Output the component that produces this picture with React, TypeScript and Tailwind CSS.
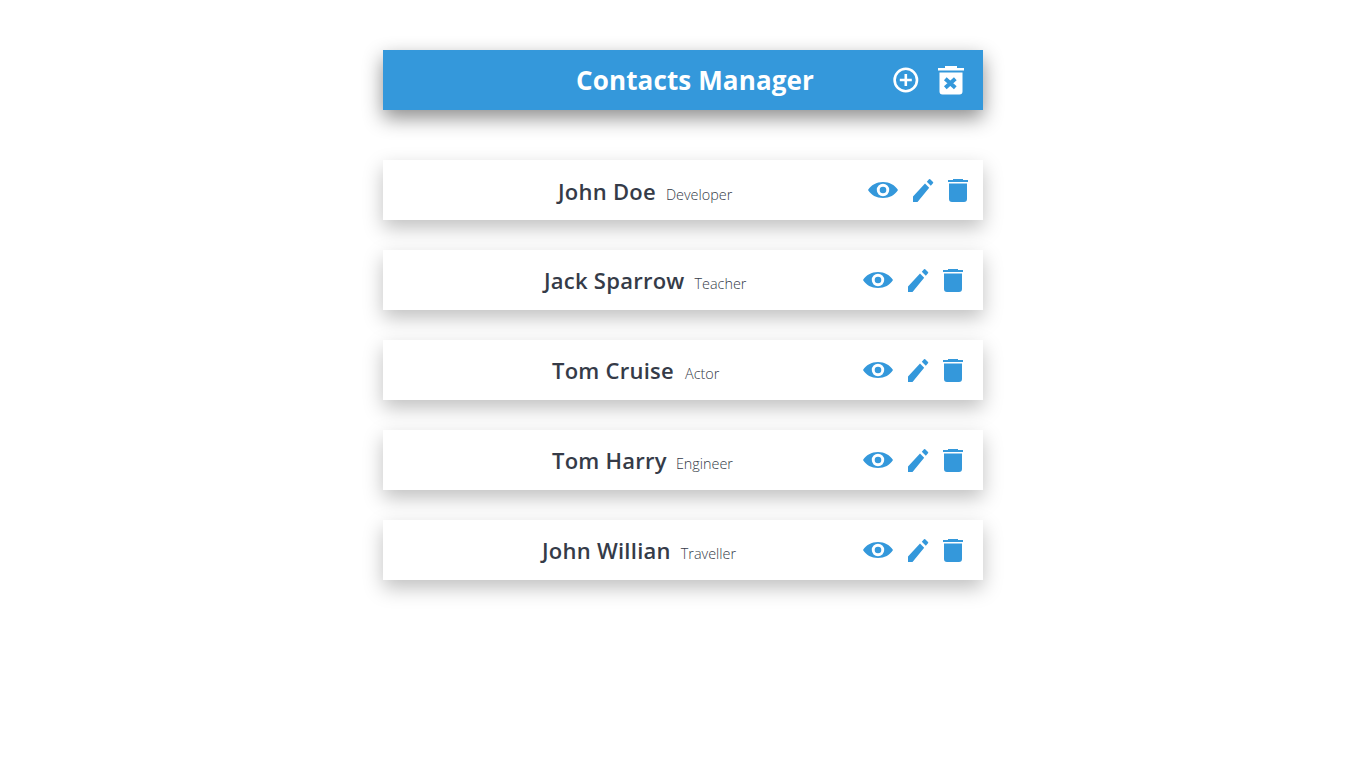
const contacts = [
  { name: "John Doe", job: "Developer", text: "ml-[175px] pt-[2px]", jobGap: "ml-[10px]", icons: "flex items-center gap-[14px] mr-[15px]" },
  { name: "Jack Sparrow", job: "Teacher", text: "ml-[161px]", jobGap: "ml-[10px]", icons: "flex items-center gap-[14px] mr-[20px]" },
  { name: "Tom Cruise", job: "Actor", text: "ml-[169px]", jobGap: "ml-[11px]", icons: "flex items-center gap-[14px] mr-[20px]" },
  { name: "Tom Harry", job: "Engineer", text: "ml-[169px]", jobGap: "ml-[9px]", icons: "flex items-center gap-[14px] mr-[20px]" },
  { name: "John Willian", job: "Traveller", text: "ml-[159px]", jobGap: "ml-[10px]", icons: "flex items-center gap-[14px] mr-[20px]" },
];

const EyeIcon = () => (
  <svg viewBox="0 0 30 20" className="w-[30px] h-5 block" fill="#3498db" fillRule="evenodd">
    <path d="M0 10C3 5 8.500 2 15 2s12 3 15 8c-3 5-8.500 8-15 8S3 15 0 10zM15 3.800a6.200 6.200 0 1 0 0 12.400 6.200 6.200 0 0 0 0-12.400zM15 6.700a3.300 3.300 0 1 1 0 6.600 3.300 3.300 0 0 1 0-6.600z" />
  </svg>
);

const PenIcon = () => (
  <svg viewBox="0 0 22 24" className="w-[22px] h-6 block" fill="#3498db">
    <path d="M1 18.500L13 5.500l4.200 4.300L5.500 24H1zM14.800 3.800L17 1.200q.6-.6 1.200 0L21 4q.6.6 0 1.200l-2.200 2.600z" />
  </svg>
);

const TrashIcon = () => (
  <svg viewBox="0 0 20 24" className="w-5 h-6 block" fill="#3498db">
    <path d="M0 2h5V1h10v1h5v2H0zM1 5.500h18V21a3 3 0 0 1-3 3H4a3 3 0 0 1-3-3z" />
  </svg>
);

const PlusCircleIcon = () => (
  <svg viewBox="0 0 26 26" className="w-[26px] h-[26px] block" fill="none" stroke="#fff" strokeWidth="2.600">
    <circle cx="12.800" cy="13" r="11.200" />
    <path d="M12.800 7v12M6.800 13h12" />
  </svg>
);

const TrashXIcon = () => (
  <svg viewBox="0 0 26 30" className="w-[26px] h-[30px] block">
    <path fill="#fff" d="M0 3h7V1h12v2h7v2.500H0zM1.500 7.500h23v19a3 3 0 0 1-3 3h-17a3 3 0 0 1-3-3z" />
    <path d="M7.300 13.800l10 9M17.300 13.800l-10 9" stroke="#3498db" strokeWidth="4" />
  </svg>
);

const App = () => {
  return (
    <div className="min-h-screen bg-white pt-[50px] font-['Open_Sans',sans-serif]">
      <div className="w-[600px] mx-auto">
        <header className="h-[60px] flex items-center bg-[#3498db] shadow-[0_8px_20px_rgba(0,0,0,0.45)]">
          <h1 className="w-[480px] pl-[144px] text-center text-[26px] tracking-[0.13px] font-bold text-white whitespace-nowrap">
            Contacts Manager
          </h1>
          <div className="flex items-center gap-[19px] ml-[30px]">
            <PlusCircleIcon />
            <TrashXIcon />
          </div>
        </header>
        <ul className="mt-[50px] space-y-[30px]">
          {contacts.map((c) => (
            <li
              key={c.name}
              className="h-[60px] flex items-center justify-between bg-white shadow-[0_8px_20px_rgba(0,0,0,0.25)]"
            >
              <div className={`${c.text} whitespace-nowrap text-[#353b48]`}>
                <span className="text-[22px] font-semibold tracking-[0.25px]">{c.name}</span>
                <span className={`${c.jobGap} text-[14.4px] font-light`}>{c.job}</span>
              </div>
              <div className={c.icons}>
                <EyeIcon />
                <PenIcon />
                <TrashIcon />
              </div>
            </li>
          ))}
        </ul>
      </div>
    </div>
  );
};

export default App;
